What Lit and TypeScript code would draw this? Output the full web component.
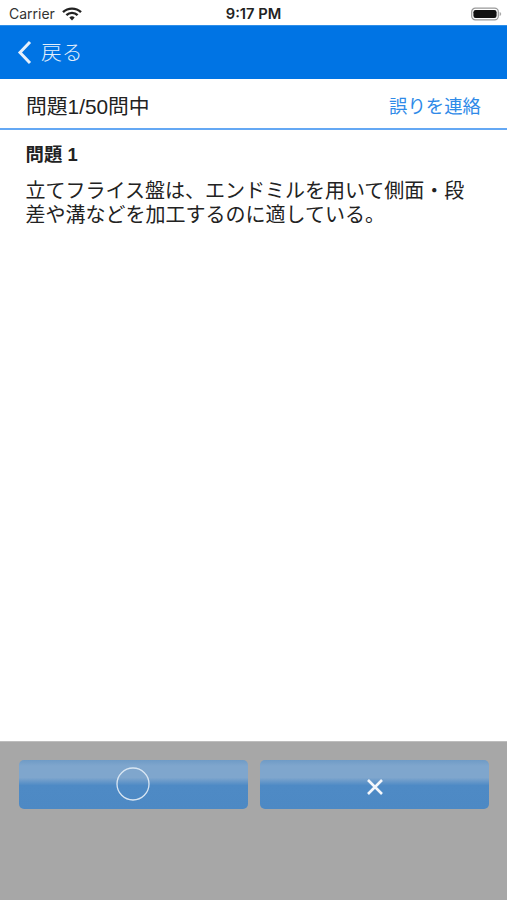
import { LitElement, html, css } from "lit";
import { customElement } from "lit/decorators.js";

@customElement("app-root")
export class AppRoot extends LitElement {
  static styles = css`
    :host { display: block; width: 507px; height: 900px; background: #fff; overflow: hidden; }
    * { box-sizing: border-box; }
    .page { display: flex; flex-direction: column; height: 900px; font-family: "Liberation Sans", "Noto Sans CJK JP", sans-serif; }
    .status { height: 25px; flex: none; display: grid; grid-template-columns: 1fr auto 1fr; align-items: center; padding: 2px 5px 0 9px; color: #222; }
    .status-left { display: flex; align-items: center; gap: 7px; font-size: 14px; color: #333; font-family: Inter, "Liberation Sans", sans-serif; }
    .time { font-size: 14.7px; font-weight: 600; font-family: Inter, "Liberation Sans", sans-serif; color: #222; margin-right: 4px; }
    .status-right { display: flex; justify-content: flex-end; }
    .nav { height: 54px; flex: none; background: #0074e4; border-top: 1px solid #2f8fe8; display: flex; align-items: center; gap: 9px; padding-left: 17px; }
    .nav-label { font-size: 20.8px; font-family: "Noto Sans CJK JP", sans-serif; font-weight: 300; line-height: 1; color: #e4effb; margin-top: -3px; }
    .head { height: 51px; flex: none; display: flex; align-items: center; justify-content: space-between; padding: 2px 26px 0; border-bottom: 2px solid #64a8f4; }
    .head-title { font-size: 20.8px; color: #222; font-weight: 400; font-family: "Liberation Sans", "Noto Sans CJK JP", sans-serif; }
    .head-link { font-size: 18.4px; color: #2f8ae8; font-family: "Noto Sans CJK JP", sans-serif; font-weight: 400; }
    .body { flex: 1; padding: 12px 26px 0 25.5px; }
    .q-title { font-size: 18.4px; font-weight: 700; color: #222; line-height: 25px; font-family: "Liberation Sans", "Noto Sans CJK JP", sans-serif; margin-bottom: 11px; }
    .q-text { font-size: 20px; line-height: 24px; color: #222; font-family: "Noto Sans CJK JP", sans-serif; font-weight: 400; }
    .footer { height: 159px; flex: none; background: #a7a7a7; border-top: 1px solid #bdbdbd; display: grid; grid-template-columns: 229px 229px; gap: 12px; padding: 18px 19px 0; align-content: start; }
    .btn { height: 49px; border: 0; padding: 0; border-radius: 5px; background: linear-gradient(#6f9bc6 0, #7fa6cd 12%, #7fa6cd 36%, #4e8ac5 52%, #4d89c4 100%); display: flex; justify-content: center; align-items: center; }
    .cross { margin-top: 5px; }
    .circle { margin-right: 1px; margin-top: -1px; }
    svg { display: block; }
  `;

  render() {
    return html`<div class="page">
      <div class="status">
        <div class="status-left"><span>Carrier</span>
          <svg width="20" height="14" viewBox="0 0 20 14"><path d="M1 5.2a13 13 0 0 1 18 0" fill="none" stroke="#222" stroke-width="2.4"/><path d="M4.4 8.2a8 8 0 0 1 11.2 0" fill="none" stroke="#222" stroke-width="2.4"/><path d="M7.3 10.6 10 13.4l2.7-2.8a4 4 0 0 0-5.4 0z" fill="#222"/></svg>
        </div>
        <div class="time">9:17 PM</div>
        <div class="status-right">
          <svg width="31" height="14" viewBox="0 0 31 14"><rect x=".7" y="1.2" width="26.6" height="11.6" rx="3.6" fill="none" stroke="#999" stroke-width="1.2"/><rect x="2.4" y="3" width="23.2" height="8" rx="2.2" fill="#111"/><path d="M28.6 5v4c1-.3 1.6-1 1.6-2s-.6-1.7-1.6-2z" fill="#aaa"/></svg>
        </div>
      </div>
      <div class="nav">
        <svg width="15" height="25" viewBox="0 0 15 25"><path d="M13 2 3 12.5 13 23" fill="none" stroke="#e6f0fb" stroke-width="3"/></svg>
        <span class="nav-label">戻る</span>
      </div>
      <div class="head"><span class="head-title">問題1/50問中</span><span class="head-link">誤りを連絡</span></div>
      <div class="body">
        <div class="q-title">問題 1</div>
        <div class="q-text">立てフライス盤は、エンドミルを用いて側面・段差や溝などを加工するのに適している。</div>
      </div>
      <div class="footer">
        <button class="btn" aria-label="正解">
          <svg class="circle" width="34" height="34" viewBox="0 0 34 34"><circle cx="17" cy="17" r="16" fill="none" stroke="#d9e6f3" stroke-width="1.3"/></svg>
        </button>
        <button class="btn" aria-label="不正解">
          <svg class="cross" width="18" height="18" viewBox="0 0 18 18"><path d="M2 2l14 14M16 2 2 16" stroke="#f4f7fb" stroke-width="2.6"/></svg>
        </button>
      </div>
    </div>`;
  }
}
